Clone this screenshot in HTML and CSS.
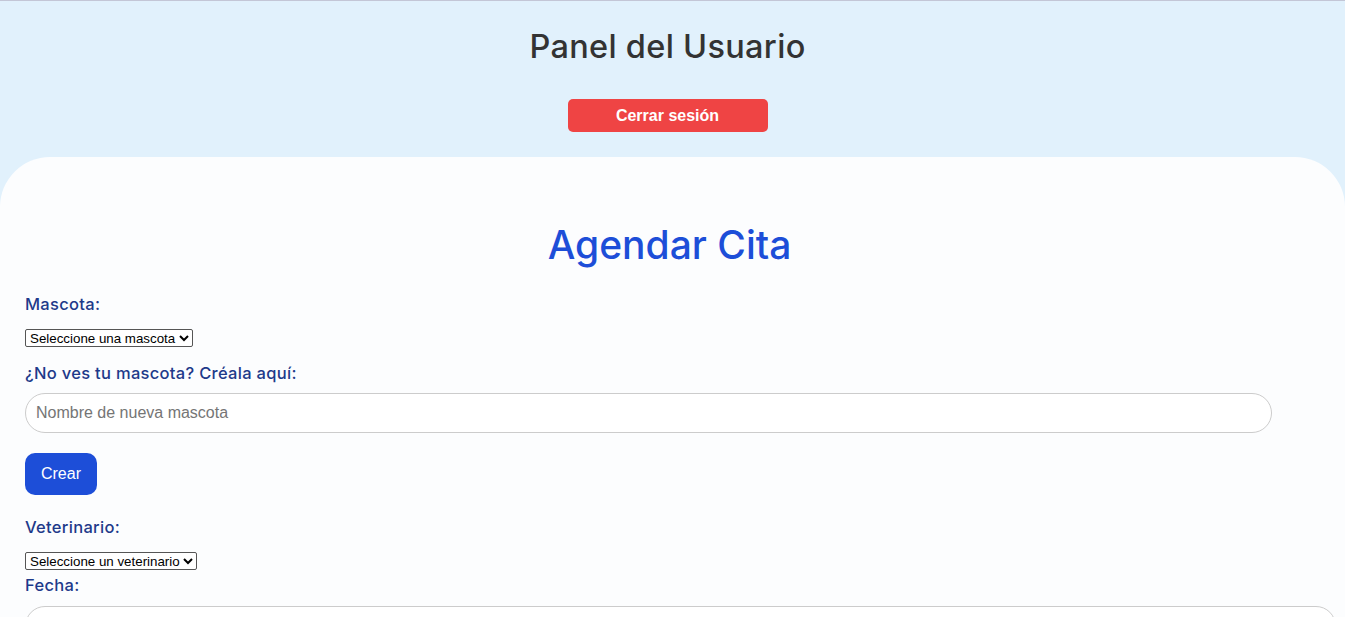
FILE: index.html
```html
<!DOCTYPE html>
<html lang="es">
<head>
<meta charset="utf-8">
<title>Panel del Usuario</title>
<link rel="stylesheet" href="styles.css">
</head>
<body>
<header class="top">
  <h1 class="top-title">Panel del Usuario</h1>
  <button class="logout">Cerrar sesión</button>
</header>
<main class="card">
  <h2 class="card-title">Agendar Cita</h2>
  <form class="form">
    <label class="lbl lbl-first">Mascota:</label>
    <select class="sel"><option>Seleccione una mascota</option></select>
    <label class="lbl lbl-new">¿No ves tu mascota? Créala aquí:</label>
    <input class="txt txt-name" type="text" placeholder="Nombre de nueva mascota">
    <button class="create" type="button">Crear</button>
    <label class="lbl lbl-vet">Veterinario:</label>
    <select class="sel"><option>Seleccione un veterinario</option></select>
    <label class="lbl lbl-date">Fecha:</label>
    <input class="txt txt-date" type="text">
  </form>
</main>
</body>
</html>
```

FILE: styles.css
```css
html, body {
  margin: 0;
  padding: 0;
}
body {
  background: #e1f1fc;
  border-top: 1px solid #c3c6d6;
  font-family: "Inter", "Noto Sans", sans-serif;
  overflow: hidden;
  height: 616px;
}
.top {
  display: flex;
  flex-direction: column;
  align-items: center;
  padding: 26px 10px 0 0;
  height: 130px;
}
.top-title {
  margin: 0;
  font-size: 32.5px;
  font-weight: 500;
  color: #333333;
  line-height: 40px;
  letter-spacing: 0.3px;
}
.logout {
  margin-top: 32px;
  width: 200px;
  height: 33px;
  background: #ef4444;
  color: #fff;
  border: none;
  border-radius: 5px;
  font-family: "Liberation Sans", Arial, sans-serif;
  font-weight: bold;
  font-size: 16px;
}
.card {
  background: #fcfdfe;
  border-radius: 50px 50px 0 0;
  padding: 64px 25px 0 25px;
  min-height: 500px;
}
.card-title {
  margin: 0;
  padding-right: 6px;
  text-align: center;
  font-size: 39px;
  font-weight: 500;
  color: #1d4ed8;
  line-height: 48px;
}
.form {
  display: flex;
  flex-direction: column;
  align-items: flex-start;
}
.lbl {
  color: #1e3a8a;
  font-size: 16.5px;
  font-weight: 500;
  line-height: 20px;
  letter-spacing: 0.3px;
}
.lbl-first { margin-top: 25px; }
.sel {
  margin-top: 15px;
  font-family: "Liberation Sans", Arial, sans-serif;
  font-size: 13.33px;
  height: 18px;
  padding: 0;
  border: 1px solid #555;
  border-radius: 2px;
  background: #fff;
  color: #000;
}
.lbl-new { margin-top: 16px; }
.txt {
  box-sizing: border-box;
  height: 40px;
  border: 1px solid #cccccc;
  border-radius: 20px;
  background: #fff;
  padding: 0 10px;
  font-family: "Liberation Sans", Arial, sans-serif;
  font-size: 16px;
  color: #333;
}
.txt::placeholder { color: #757575; }
.txt-name {
  margin-top: 10px;
  width: 1247px;
}
.create {
  margin-top: 20px;
  width: 72px;
  height: 42px;
  background: #1d4ed8;
  color: #fff;
  border: none;
  border-radius: 10px;
  font-family: "Liberation Sans", Arial, sans-serif;
  font-size: 16px;
}
.lbl-vet { margin-top: 22px; }
.lbl-date { margin-top: 5px; }
.txt-date {
  margin-top: 11px;
  width: 1311px;
}
```
